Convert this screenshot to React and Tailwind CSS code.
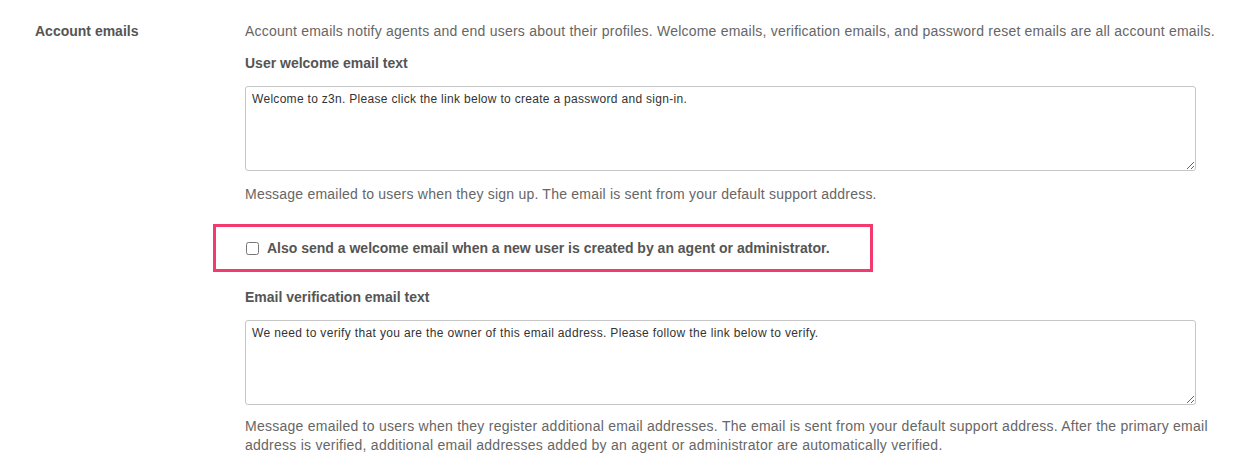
export default function App() {
  return (
    <div className="w-[1254px] h-[475px] bg-white overflow-hidden" style={{ fontFamily: '"Liberation Sans", Arial, sans-serif' }}>
      <div className="flex pt-[21px]">
        <div className="w-[245px] shrink-0 pl-[35px]">
          <div className="text-[14px] leading-[20px] font-bold text-[#555]">Account emails</div>
        </div>
        <div className="flex-1 pr-[20px]">
          <p className="text-[14px] leading-[20px] text-[#666] tracking-[0.22px]">
            Account emails notify agents and end users about their profiles. Welcome emails, verification emails, and password reset emails are all account emails.
          </p>
          <div className="mt-[12px] text-[14px] leading-[20px] font-bold text-[#555]">User welcome email text</div>
          <textarea
            className="mt-[13px] block w-[951px] h-[85px] border border-[#c6c6c6] rounded-[3px] px-[6px] py-[4px] text-[12px] leading-[16px] text-[#333] tracking-[0.3px] resize-y"
            defaultValue="Welcome to z3n. Please click the link below to create a password and sign-in."
          />
          <p className="mt-[13px] text-[14px] leading-[20px] text-[#666] tracking-[0.22px]">
            Message emailed to users when they sign up. The email is sent from your default support address.
          </p>
          <div className="-ml-[32px] mt-[20px] w-[660px] h-[48px] border-[3px] border-[#f23a6e] flex items-center pl-[30px]">
            <input type="checkbox" className="w-[13px] h-[13px] m-0" />
            <span className="ml-[8px] text-[14px] leading-[20px] font-bold text-[#555]">
              Also send a welcome email when a new user is created by an agent or administrator.
            </span>
          </div>
          <div className="mt-[15px] text-[14px] leading-[20px] font-bold text-[#555]">Email verification email text</div>
          <textarea
            className="mt-[13px] block w-[951px] h-[85px] border border-[#c6c6c6] rounded-[3px] px-[6px] py-[4px] text-[12px] leading-[16px] text-[#333] tracking-[0.35px] resize-y"
            defaultValue="We need to verify that you are the owner of this email address. Please follow the link below to verify."
          />
          <p className="mt-[12px] w-[975px] text-[14px] leading-[19px] text-[#666] tracking-[0.25px]">
            Message emailed to users when they register additional email addresses. The email is sent from your default support address. After the primary email address is verified, additional email addresses added by an agent or administrator are automatically verified.
          </p>
        </div>
      </div>
    </div>
  );
}
